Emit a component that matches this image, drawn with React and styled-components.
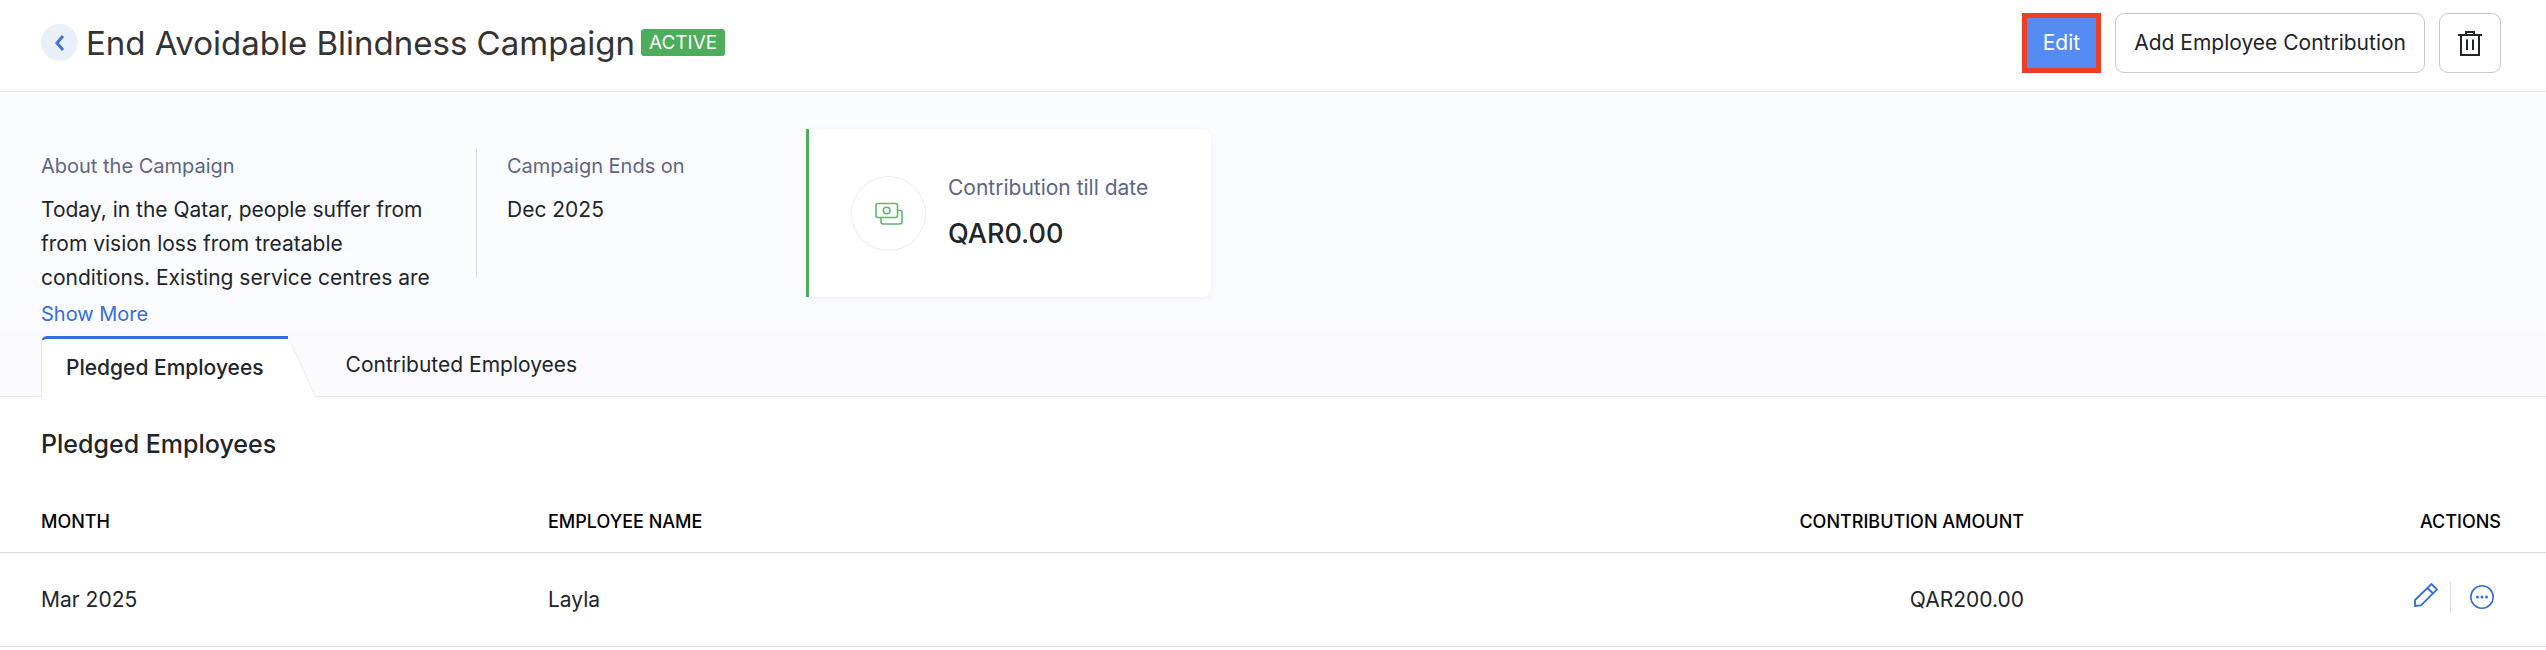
import React, { useState } from "react";
import styled, { createGlobalStyle } from "styled-components";

const GlobalStyle = createGlobalStyle`
  * {
    box-sizing: border-box;
  }

  body {
    margin: 0;
    background: #fff;
    color: #212529;
    font-family: Inter, "Liberation Sans", sans-serif;
    font-size: 21px;
    line-height: 34px;
  }

  button {
    margin: 0;
    padding: 0;
    border: 0;
    background: none;
    color: inherit;
    font: inherit;
    cursor: pointer;
  }
`;

const Header = styled.header`
  display: flex;
  align-items: center;
  justify-content: space-between;
  padding: 13px 45px 18px 41px;
  border-bottom: 1px solid #e6e9ea;
`;

const TitleGroup = styled.div`
  display: flex;
  align-items: center;
  padding-bottom: 1px;
`;

const BackButton = styled.button`
  display: flex;
  align-items: center;
  justify-content: center;
  width: 37px;
  height: 37px;
  margin-right: 8px;
  border-radius: 50%;
  background: #e9f0fa;
`;

const Title = styled.h1`
  margin: 0;
  color: #333;
  font-size: 33px;
  font-weight: 400;
  line-height: 40px;
`;

const Badge = styled.span`
  margin-left: 6px;
  padding: 0 8px;
  border-radius: 3px;
  background: #4cad5b;
  color: #fff;
  font-size: 19px;
  line-height: 27px;
`;

const ButtonGroup = styled.div`
  display: flex;
  align-items: center;
`;

const Button = styled.button`
  display: flex;
  align-items: center;
  justify-content: center;
  height: 60px;
  margin-left: 14px;
  padding: 0 18px;
  border: 1px solid #c9c9cb;
  border-radius: 9px;
  background: #fff;
`;

const EditButton = styled(Button)`
  padding: 0 16px;
  border: 5px solid #eb4026;
  border-radius: 0;
  background: #558cf4;
  color: #fff;
`;

const Summary = styled.section`
  display: flex;
  align-items: flex-start;
  padding: 37px 45px 0 41px;
  background: #fbfcff;
`;

const Info = styled.div`
  width: ${props => props.$width};
  padding-top: 20px;
`;

const Label = styled.div`
  color: #5d6584;
  font-size: ${props => (props.$large ? "21px" : "20px")};
  line-height: 34px;
`;

const Text = styled.p`
  max-width: 400px;
  margin: 10px 0 0;
`;

const LinkButton = styled.button`
  display: block;
  margin-top: 2px;
  color: #356ddb;
  font-size: 20px;
`;

const Divider = styled.div`
  width: 1px;
  height: 129px;
  margin: 20px 30px 0 0;
  background: #dcdde3;
`;

const Card = styled.div`
  display: flex;
  align-items: center;
  width: 405px;
  height: 168px;
  padding-left: 42px;
  border-left: 3px solid #4cad5b;
  border-radius: 0 9px 9px 0;
  background: #fff;
  box-shadow: 0 2px 6px rgba(60, 70, 120, 0.06);
`;

const CardIcon = styled.div`
  display: flex;
  align-items: center;
  justify-content: center;
  width: 75px;
  height: 75px;
  margin-right: 22px;
  padding-top: 2px;
  border: 1px solid #ececec;
  border-radius: 50%;
`;

const CardBody = styled.div`
  padding-bottom: 4px;
`;

const Amount = styled.div`
  margin-top: 12px;
  font-size: 27px;
  font-weight: 500;
`;

const Tabs = styled.div`
  display: flex;
  padding: 5px 41px 0;
  border-bottom: 1px solid #e8e8ea;
  background: #fbfbff;
`;

const ActiveTab = styled.button`
  position: relative;
  height: 61px;
  margin-bottom: -1px;
  padding: 0 24px;
  border-top: 3px solid #356ddb;
  border-left: 1px solid #e8e8ea;
  border-radius: 6px 0 0 0;
  background: #fff;
  font-weight: 500;

  /* slanted right edge */
  &::after {
    content: "";
    position: absolute;
    top: 0;
    right: -28px;
    bottom: 0;
    width: 40px;
    border-right: 1px solid #e8e8ea;
    border-top-right-radius: 9px;
    background: #fff;
    transform: skewX(24deg);
    transform-origin: bottom;
    z-index: 0;
  }

  span {
    position: relative;
    z-index: 1;
  }
`;

const Tab = styled.button`
  margin-left: 58px;
  height: 57px;
`;

const SectionTitle = styled.h2`
  margin: 0;
  padding: 30px 41px;
  font-size: 25px;
  font-weight: 500;
  line-height: 34px;
`;

const Table = styled.table`
  width: 100%;
  table-layout: fixed;
  border-collapse: collapse;

  th,
  td {
    padding: 2px 0 0;
    border-bottom: 1px solid #d9d9dc;
    text-align: left;
  }

  th {
    height: 61px;
    color: #000;
    font-size: 18px;
    font-weight: 500;
  }

  td {
    height: 94px;
  }

  th:first-child,
  td:first-child {
    width: 548px;
    padding-left: 41px;
  }

  th:nth-child(3),
  td:nth-child(3) {
    text-align: right;
  }

  th:last-child,
  td:last-child {
    width: 522px;
    padding-right: 45px;
    text-align: right;
  }
`;

const Actions = styled.div`
  display: flex;
  align-items: center;
  justify-content: flex-end;
  padding: 0 7px 6px 0;
  color: #356ddb;
`;

const IconButton = styled.button`
  display: flex;
  margin-bottom: ${props => (props.$raised ? "4px" : "0")};
`;

const ActionDivider = styled.span`
  width: 1px;
  height: 30px;
  margin: 0 19px 0 12px;
  background: #dcdcef;
`;

const ChevronIcon = () => (
  <svg width="12" height="18" viewBox="0 0 12 18" fill="none">
    <path d="M9 2 3 9l6 7" stroke="#3f74d6" strokeWidth="3" />
  </svg>
);

const TrashIcon = () => (
  <svg width="24" height="26" viewBox="0 0 24 26" fill="none" stroke="#212529" strokeWidth="2">
    <path d="M0 5h24M8 5V2h8v3M3 5v20h18V5M9 9.500v10.500M15 9.500v10.500" />
  </svg>
);

const MoneyIcon = () => (
  <svg width="28" height="24" viewBox="0 0 28 24" fill="none" stroke="#5cb96c" strokeWidth="1.600">
    <rect x="1" y="1.500" width="21.500" height="14" rx="2" />
    <circle cx="11.700" cy="8.500" r="3.300" />
    <path d="M6 15.500V20a2 2 0 0 0 2 2h17a2 2 0 0 0 2-2v-9.500a2 2 0 0 0-2-2h-2.500" />
  </svg>
);

const PencilIcon = () => (
  <svg width="24" height="24" viewBox="0 0 24 24" fill="none" stroke="currentColor" strokeWidth="1.800">
    <path d="M1 23V17L17.500 1 23 6.500 7 22.500ZM13.500 5l5.500 5.500" />
  </svg>
);

const MoreIcon = () => (
  <svg width="24" height="24" viewBox="0 0 24 24">
    <circle cx="12" cy="12" r="11.200" fill="none" stroke="currentColor" strokeWidth="1.600" />
    <g fill="currentColor">
      <circle cx="7.500" cy="12" r="1.500" />
      <circle cx="12" cy="12" r="1.500" />
      <circle cx="16.500" cy="12" r="1.500" />
    </g>
  </svg>
);

const rows = [{ month: "Mar 2025", name: "Layla", amount: "QAR200.00" }];

const App = () => {
  const [selected, setSelected] = useState("pledged");

  return (
    <>
      <GlobalStyle />
      <Header>
        <TitleGroup>
          <BackButton aria-label="Back">
            <ChevronIcon />
          </BackButton>
          <Title>End Avoidable Blindness Campaign</Title>
          <Badge>ACTIVE</Badge>
        </TitleGroup>
        <ButtonGroup>
          <EditButton>Edit</EditButton>
          <Button>Add Employee Contribution</Button>
          <Button aria-label="Delete">
            <TrashIcon />
          </Button>
        </ButtonGroup>
      </Header>

      <Summary>
        <Info $width="435px">
          <Label>About the Campaign</Label>
          <Text>
            Today, in the Qatar, people suffer from from vision loss from
            treatable conditions. Existing service centres are
          </Text>
          <LinkButton>Show More</LinkButton>
        </Info>
        <Divider />
        <Info $width="299px">
          <Label>Campaign Ends on</Label>
          <Text>Dec 2025</Text>
        </Info>
        <Card>
          <CardIcon>
            <MoneyIcon />
          </CardIcon>
          <CardBody>
            <Label $large>Contribution till date</Label>
            <Amount>QAR0.00</Amount>
          </CardBody>
        </Card>
      </Summary>

      <Tabs role="tablist">
        <ActiveTab
          role="tab"
          aria-selected={selected === "pledged"}
          onClick={() => setSelected("pledged")}
        >
          <span>Pledged Employees</span>
        </ActiveTab>
        <Tab
          role="tab"
          aria-selected={selected === "contributed"}
          onClick={() => setSelected("contributed")}
        >
          Contributed Employees
        </Tab>
      </Tabs>

      <SectionTitle>Pledged Employees</SectionTitle>
      <Table>
        <thead>
          <tr>
            <th>MONTH</th>
            <th>EMPLOYEE NAME</th>
            <th>CONTRIBUTION AMOUNT</th>
            <th>ACTIONS</th>
          </tr>
        </thead>
        <tbody>
          {rows.map(row => (
            <tr key={row.name}>
              <td>{row.month}</td>
              <td>{row.name}</td>
              <td>{row.amount}</td>
              <td>
                <Actions>
                  <IconButton aria-label="Edit pledge" $raised>
                    <PencilIcon />
                  </IconButton>
                  <ActionDivider />
                  <IconButton aria-label="More actions">
                    <MoreIcon />
                  </IconButton>
                </Actions>
              </td>
            </tr>
          ))}
        </tbody>
      </Table>
    </>
  );
};

export default App;
